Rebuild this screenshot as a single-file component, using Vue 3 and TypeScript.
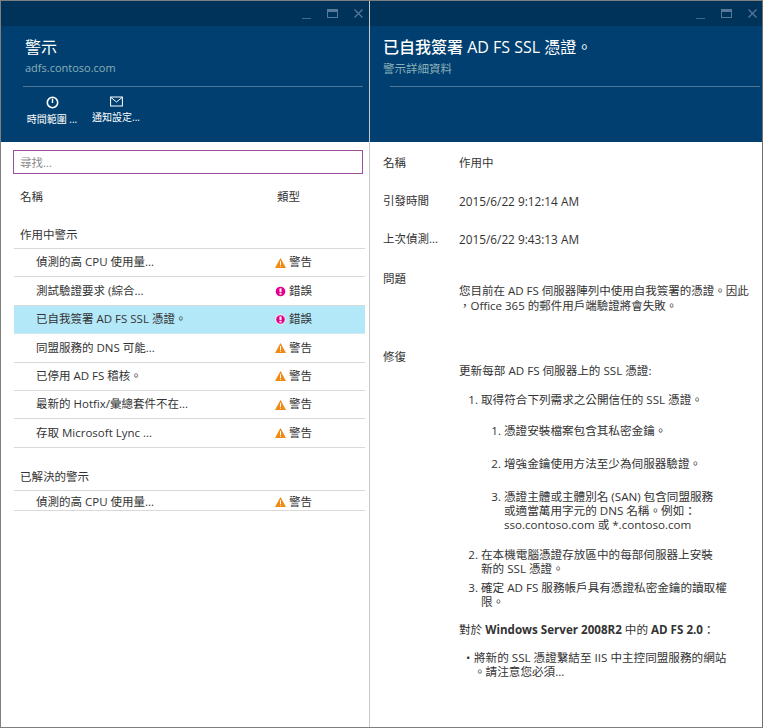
<script setup lang="ts">
interface Alert { name: string; kind: 'warn' | 'error'; selected?: boolean }

const active: Alert[] = [
  { name: '偵測的高 CPU 使用量...', kind: 'warn' },
  { name: '測試驗證要求 (綜合...', kind: 'error' },
  { name: '已自我簽署 AD FS SSL 憑證。', kind: 'error', selected: true },
  { name: '同盟服務的 DNS 可能...', kind: 'warn' },
  { name: '已停用 AD FS 稽核。', kind: 'warn' },
  { name: '最新的 Hotfix/彙總套件不在...', kind: 'warn' },
  { name: '存取 Microsoft Lync ...', kind: 'warn' },
]
const resolved: Alert[] = [{ name: '偵測的高 CPU 使用量...', kind: 'warn' }]
const sections = [
  { title: '作用中警示', rows: active },
  { title: '已解決的警示', rows: resolved },
]
</script>

<template>
  <div class="window">
    <section class="blade left">
      <header class="head">
        <div class="chrome">
          <span class="min"></span><span class="max"></span>
          <svg class="close" width="9" height="9" viewBox="0 0 9 9"><path d="M.5.5l8 8M8.5.5l-8 8" stroke="#56789a" stroke-width="1.2" fill="none" /></svg>
        </div>
        <div class="titles left-titles">
          <h1>警示</h1>
          <p>adfs.contoso.com</p>
        </div>
        <div class="rule left-rule"></div>
        <div class="commands">
          <div class="cmd cmd-time">
            <svg width="13" height="13" viewBox="0 0 13 13"><circle cx="6.5" cy="6.5" r="5.2" stroke="#fff" stroke-width="1.6" fill="none" /><path d="M6.5 2.5v4.5" stroke="#fff" stroke-width="1.4" /></svg>
            <span>時間範圍 ...</span>
          </div>
          <div class="cmd cmd-mail">
            <svg width="13" height="11" viewBox="0 0 13 11"><rect x=".6" y="1" width="11.8" height="9" stroke="#fff" fill="none" /><path d="M1 1.5l5.5 4.5 5.5-4.5" stroke="#fff" fill="none" /></svg>
            <span>通知設定...</span>
          </div>
        </div>
      </header>
      <div class="body-left">
        <div class="search">尋找...</div>
        <div class="cols"><span>名稱</span><span class="col-type">類型</span></div>
        <div v-for="s in sections" :key="s.title" class="group">
          <div class="group-title">{{ s.title }}</div>
          <div v-for="(r, i) in s.rows" :key="i" class="row" :class="{ selected: r.selected }">
            <span class="row-name">{{ r.name }}</span>
            <span class="row-type">
              <svg v-if="r.kind === 'warn'" width="11" height="10" viewBox="0 0 11 10"><path d="M5.5 0L11 10H0z" fill="#f08a14" /><path d="M5 3h1v4H5zM5 7.8h1v1H5z" fill="#fff" /></svg>
              <svg v-else width="11" height="11" viewBox="0 0 11 11"><circle cx="5.5" cy="5.5" r="4.8" fill="#e3008c" /><rect x="4.5" y="2.4" width="2" height="3.8" fill="#fff" /><rect x="4.5" y="7" width="2" height="1.6" fill="#fff" /></svg>
              <span>{{ r.kind === 'warn' ? '警告' : '錯誤' }}</span>
            </span>
          </div>
        </div>
      </div>
    </section>

    <section class="blade right">
      <header class="head">
        <div class="chrome">
          <span class="min"></span><span class="max"></span>
          <svg class="close" width="9" height="9" viewBox="0 0 9 9"><path d="M.5.5l8 8M8.5.5l-8 8" stroke="#56789a" stroke-width="1.2" fill="none" /></svg>
        </div>
        <div class="titles right-titles">
          <h1><span class="heavy">已自我簽署</span> AD FS SSL 憑證。</h1>
          <p class="sub">警示詳細資料</p>
        </div>
        <div class="rule right-rule"></div>
      </header>
      <div class="body-right">
        <div class="field f-state"><span class="label">名稱</span><span class="value">作用中</span></div>
        <div class="field f-time"><span class="label">引發時間</span><span class="value date">2015/6/22 9:12:14 AM</span></div>
        <div class="field f-last"><span class="label">上次偵測...</span><span class="value date">2015/6/22 9:43:13 AM</span></div>
        <div class="field f-issue">
          <span class="label">問題</span>
          <div class="value text-block issue">您目前在 AD FS 伺服器陣列中使用自我簽署的憑證。因此<br />，Office 365 的郵件用戶端驗證將會失敗。</div>
        </div>
        <div class="field f-fix">
          <span class="label">修復</span>
          <div class="value text-block fix">
            <p>更新每部 AD FS 伺服器上的 SSL 憑證:</p>
            <ol class="outer">
              <li>取得符合下列需求之公開信任的 SSL 憑證。
                <ol class="inner">
                  <li>憑證安裝檔案包含其私密金鑰。</li>
                  <li>增強金鑰使用方法至少為伺服器驗證。</li>
                  <li>憑證主體或主體別名 (SAN) 包含同盟服務<br />或適當萬用字元的 DNS 名稱。例如：<br />sso.contoso.com 或 *.contoso.com</li>
                </ol>
              </li>
              <li>在本機電腦憑證存放區中的每部伺服器上安裝<br />新的 SSL 憑證。</li>
              <li>確定 AD FS 服務帳戶具有憑證私密金鑰的讀取權<br />限。</li>
            </ol>
            <p class="for-line">對於 <b>Windows Server 2008R2</b> 中的 <b>AD FS 2.0</b>：</p>
            <ul class="bullets">
              <li>將新的 SSL 憑證繫結至 IIS 中主控同盟服務的網站<br />。請注意您必須...</li>
            </ul>
          </div>
        </div>
      </div>
    </section>
  </div>
</template>

<style>
html, body { margin: 0; background: #fff; }
</style>

<style scoped>
.window {
  box-sizing: border-box;
  width: 763px;
  height: 728px;
  display: flex;
  border: 1px solid #7f7f7f;
  border-right-color: #6f6f6f;
  font-family: "Open Sans", "Noto Sans CJK TC", sans-serif;
  font-size: 11.5px;
  line-height: 14.5px;
  color: #333;
  background: #fff;
  overflow: hidden;
}
.blade { display: flex; flex-direction: column; }
.left { width: 368px; border-right: 1px solid #c8c8c8; flex: none; }
.right { flex: 1; min-width: 0; }

.head { height: 141px; background: #003f6f; flex: none; box-sizing: border-box; }
.chrome {
  height: 25px;
  background: #00335a;
  display: flex;
  justify-content: flex-end;
  align-items: center;
  gap: 16px;
  padding-right: 6px;
}
.left .chrome { padding-right: 6px; }
.right .chrome { padding-right: 5px; }
.min { width: 9px; height: 1px; background: #3f6a8e; margin-top: 10px; }
.max { box-sizing: border-box; width: 11px; height: 9px; border: 1px solid #56789a; border-top-width: 3px; }
.close { display: block; }

.titles h1 { margin: 0; font-weight: 400; color: #fff; font-size: 16px; line-height: 20px; }
.titles p { margin: 3px 0 0; color: #8ab0b8; font-size: 11px; line-height: 16px; }
.left-titles { padding: 11px 0 0 24px; }
.right-titles { padding: 11px 0 0 13px; }
.heavy { font-weight: 500; }
.right-titles .sub { margin-top: 4px; font-size: 11.5px; }

.rule { height: 1px; background: #4c7697; }
.left-rule { margin: 10px 6px 0 22px; }
.right-rule { margin: 9px 2px 0 20px; }

.commands { display: flex; padding: 9px 0 0 0; }
.cmd { display: flex; flex-direction: column; align-items: center; gap: 4px; color: #fff; font-size: 10px; line-height: 13px; white-space: nowrap; }
.cmd-time { width: 52px; margin-left: 25px; }
.cmd-mail { width: 60px; margin-left: 8px; }

.body-left { padding: 8px 4px 0 12px; }
.search {
  box-sizing: border-box;
  height: 24px;
  width: 350px;
  border: 1px solid #9b4f9b;
  padding: 5px 6px 0;
  color: #8a8a8a;
  line-height: 14px;
}
.cols { display: flex; padding: 16px 0 0 7px; height: 17px; }
.col-type { position: absolute; left: 277px; }
.group { margin: 20px 0 0 1px; }
.group + .group { margin-top: 21px; }
.group-title { padding-left: 6px; height: 21px; line-height: 15px; border-bottom: 1px solid #d9d9d9; }
.row {
  display: flex;
  height: 27.4px;
  align-items: center;
  border-bottom: 1px solid #d9d9d9;
  padding-left: 22px;
  white-space: nowrap;
}
.group:last-child .row { height: 16.5px; padding-top: 3px; }
.selected { background: #b3e8f9; border-bottom-color: #d0e8ee; }
.selected circle { stroke: #fff; stroke-width: 1; }
.row-name { flex: 1; min-width: 0; }
.row-type { display: flex; align-items: center; gap: 3px; width: 90px; }

.body-right { padding: 0 0 0 13px; }
.field { display: flex; }
.label { width: 76px; flex: none; white-space: nowrap; }
.date { font-size: 11.8px; }
.f-state { padding-top: 14px; }
.f-time { padding-top: 23px; }
.f-last { padding-top: 24px; }
.f-issue { padding-top: 25px; }
.f-fix { padding-top: 37px; }
.text-block { padding-top: 11px; white-space: nowrap; }
.issue { line-height: 15px; }
.fix { padding-top: 14px; line-height: 14px; font-size: 11.6px; }
.fix p { margin: 0; }
.outer, .inner, .bullets { margin: 0; padding: 0; }
.outer { margin-top: 15px; padding-left: 22px; }
.outer > li { margin-bottom: 5px; }
.inner { margin-top: 17px; padding-left: 23px; margin-bottom: 16px; }
.inner li { margin-bottom: 19px; }
.inner li:last-child { margin-bottom: 0; }
.fix .for-line { margin-top: 14px; }
.for-line b { font-weight: 700; }
.bullets { margin-top: 14px; padding-left: 15px; list-style: none; }
.bullets li { position: relative; }
.bullets li::before { content: "•"; position: absolute; left: -8px; top: 0; }
</style>
